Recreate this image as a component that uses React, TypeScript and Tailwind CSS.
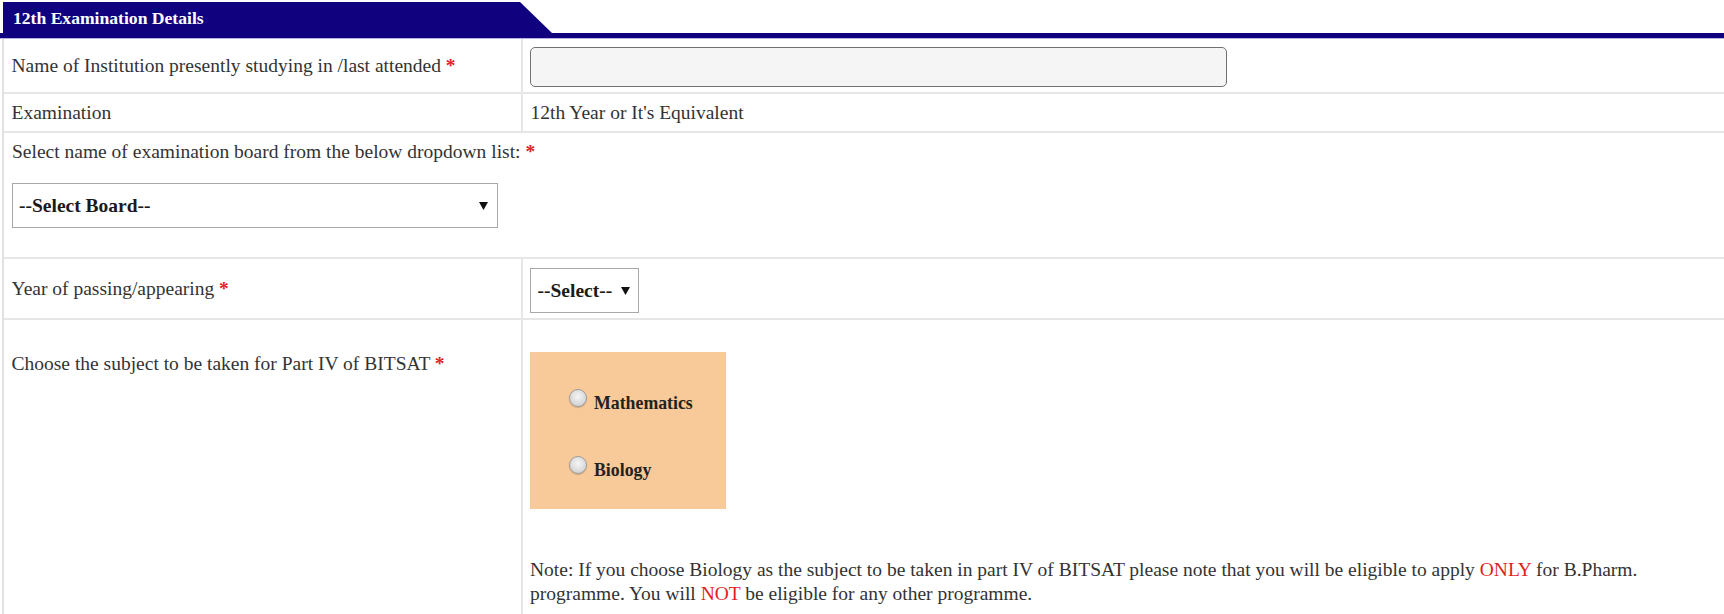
const serif = "font-['Liberation_Serif','Times_New_Roman',serif]"

function Req() {
  return <span className="font-bold text-[#e21d1d]">*</span>
}

function Caret() {
  return (
    <svg width="9" height="8" viewBox="0 0 9 8" className="shrink-0">
      <polygon points="0,0 9,0 4.5,8" fill="#111" />
    </svg>
  )
}

function Radio() {
  return (
    <span className="h-[18px] w-[18px] shrink-0 rounded-full border border-[#9c9c9c] bg-[radial-gradient(circle_at_50%_40%,#f5f5f5,#c9c9c9)] shadow-[0_1px_1px_rgba(0,0,0,0.18)]" />
  )
}

function Option({ label, className }: { label: string; className?: string }) {
  return (
    <label className={`flex items-start gap-[7px] ${className ?? ""}`}>
      <Radio />
      <span className="mt-[4px] text-[17.8px] font-bold leading-[20px] text-[#222]">{label}</span>
    </label>
  )
}

export default function App() {
  return (
    <div className={`${serif} min-h-screen bg-white text-[19.5px] leading-[24px] text-[#333]`}>
      {/* section heading tab */}
      <div className="pt-[2px]">
        <div className="ml-[3px] h-[31px] w-[549px] bg-[#10027f] pl-[10px] pt-[1px] text-[17.6px] font-bold leading-[30px] text-white [clip-path:polygon(0_0,517px_0,100%_100%,0_100%)]">
          12th Examination Details
        </div>
        <div className="h-[5px] bg-[#10027f]" />
        <div className="h-px bg-[#b4b2dc]" />
      </div>

      <div className="ml-[2px] border-l-2 border-[#e2e2e2]">
        <div className="flex h-[55px] border-b-2 border-[#e6e6e6]">
          <div className="w-[519px] shrink-0 border-r-2 border-[#e6e6e6] pl-[7.5px] pt-[15px]">
            Name of Institution presently studying in /last attended <Req />
          </div>
          <div className="pl-[7px] pt-[8px]">
            <div className="h-[40px] w-[697px] rounded-[5px] border-[1.5px] border-[#727272] bg-[#f5f5f5]" />
          </div>
        </div>

        <div className="flex h-[39px] border-b-2 border-[#e6e6e6]">
          <div className="w-[519px] shrink-0 border-r-2 border-[#e6e6e6] pl-[7.5px] pt-[6.5px]">Examination</div>
          <div className="pl-[7.5px] pt-[6.5px]">12th Year or It's Equivalent</div>
        </div>

        <div className="h-[126px] border-b-2 border-[#e6e6e6] pl-[8px] pt-[6.5px]">
          <div>
            Select name of examination board from the below dropdown list: <Req />
          </div>
          <div className="mt-[19.5px] flex h-[45px] w-[486px] items-center justify-between border-[1.5px] border-[#a8a8a8] pl-[6px] pr-[9px] font-bold text-[#1a1a1a]">
            --Select Board--
            <Caret />
          </div>
        </div>

        <div className="flex h-[61px] border-b-2 border-[#e6e6e6]">
          <div className="w-[519px] shrink-0 border-r-2 border-[#e6e6e6] pl-[7.5px] pt-[17.5px]">
            Year of passing/appearing <Req />
          </div>
          <div className="pl-[7px] pt-[9px]">
            <div className="flex h-[45px] w-[109px] items-center gap-[9px] border-[1.5px] border-[#a8a8a8] pl-[6.5px] font-bold text-[#1a1a1a]">
              --Select--
              <Caret />
            </div>
          </div>
        </div>

        <div className="flex">
          <div className="w-[519px] shrink-0 border-r-2 border-[#e6e6e6] pl-[7.5px] pt-[31.5px]">
            Choose the subject to be taken for Part IV of BITSAT <Req />
          </div>
          <div className="min-w-0 flex-1 pb-[12px] pl-[7px] pr-[8px] pt-[32px]">
            <div className="h-[157px] w-[196px] bg-[#f8c999] pl-[39px] pt-[37px]">
              <Option label="Mathematics" />
              <Option label="Biology" className="mt-[43px]" />
            </div>
            <p className="mt-[48.5px]">
              Note: If you choose Biology as the subject to be taken in part IV of BITSAT please note that you will be
              eligible to apply <span className="text-[#e21d1d]">ONLY</span> for B.Pharm. programme. You will{" "}
              <span className="text-[#e21d1d]">NOT</span> be eligible for any other programme.
            </p>
          </div>
        </div>
      </div>
    </div>
  )
}
